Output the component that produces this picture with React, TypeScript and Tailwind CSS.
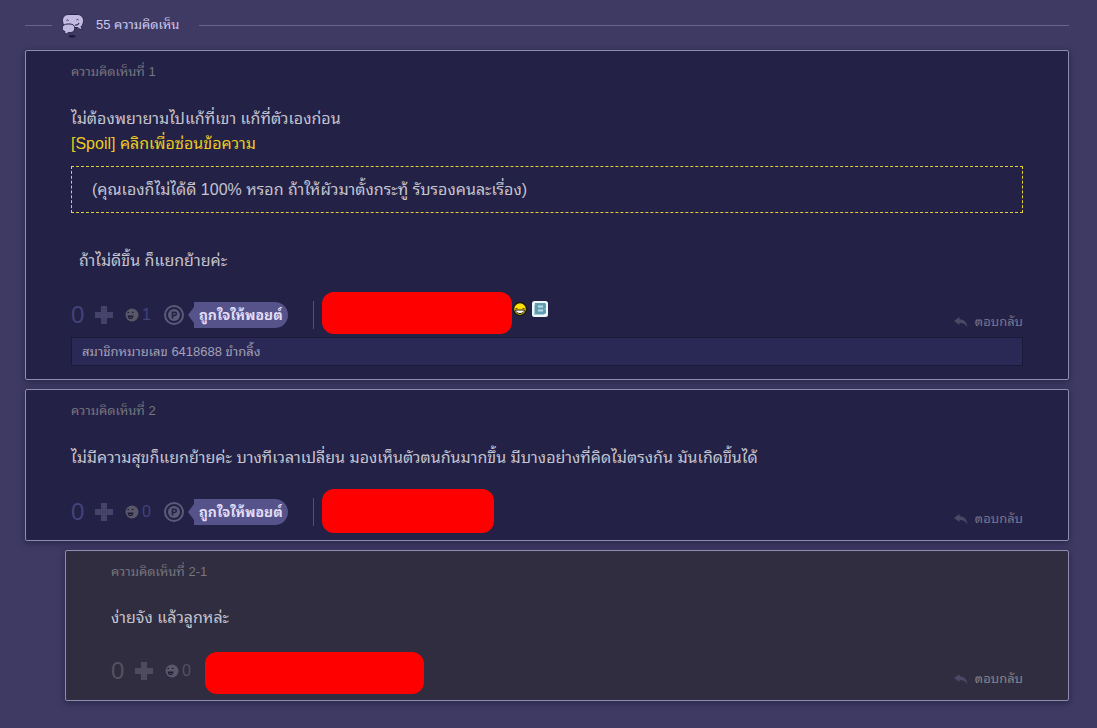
import type { ReactNode } from 'react'
import clsx from 'clsx'

interface CommentProps {
  no: string
  children: ReactNode
  author: ReactNode
  emotions?: number
  reply?: boolean
  likers?: string
}

function ChatIcon() {
  return (
    <svg width="24" height="25" viewBox="0 0 24 25" aria-hidden="true">
      <ellipse cx="11" cy="23.3" rx="3.500" ry="1.200" fill="#1c1a3c" />
      <path
        d="M8 1.5h8c4 0 6.500 2.500 6.500 6 0 2.800-.9 4.800-2.300 6 .1 1.200.5 2 1.300 3-2.200.2-3.700-.8-4.700-2H8C4 14.500 1.500 11.500 1.500 7.500s2.500-6 6.500-6z"
        fill="#c3bae2"
        stroke="#29264d"
      />
      <path
        d="M7 11h2c3 0 4.800 1.800 4.800 4.200 0 2.600-1.800 4.300-4.300 4.300H7.500c-1 .9-2.700 1.500-4.500 1.100.8-.6 1.100-1.300 1-2C2.300 18 1.200 16.600 1.200 15.200 1.200 12.700 3.500 11 7 11z"
        fill="#c3bae2"
        stroke="#29264d"
      />
      <path d="M5.500 7.500q1-1.200 2 0M15.500 7q1-1.200 2 0" fill="none" stroke="#29264d" />
      <path d="M14 12c2 .3 3.500-.5 4-2.200" fill="none" stroke="#29264d" strokeWidth="1.200" />
    </svg>
  )
}

function PlusIcon() {
  return (
    <svg width="18" height="18" viewBox="0 0 18 18" fill="currentColor" aria-hidden="true">
      <path d="M6 0h6v6h6v6h-6v6H6v-6H0V6h6z" />
    </svg>
  )
}

function FaceIcon() {
  return (
    <svg width="14" height="14" viewBox="0 0 14 14" aria-hidden="true">
      <circle cx="7" cy="7" r="6.500" fill="currentColor" />
      <path d="M2.500 4.800l1.500-.6M7 4.700l1.500-.6" stroke="#1c1b38" strokeWidth="1.200" />
      <path d="M2.500 7.500h6c-.2 2.500-1.500 3.600-3 3.600S2.900 10 2.500 7.500z" fill="#1c1b38" />
      <path d="M4.200 9.200h2.600v.8H4.600z" fill="currentColor" />
    </svg>
  )
}

function PointIcon() {
  return (
    <svg width="20" height="20" viewBox="0 0 20 20" fill="none" aria-hidden="true">
      <circle cx="10" cy="10" r="9" stroke="currentColor" strokeWidth="2" />
      <circle cx="10" cy="10" r="6" fill="currentColor" />
      <path d="M8.500 13.500V7.200h2.200a1.600 1.600 0 010 3.300H8.500" stroke="#232146" strokeWidth="1.600" />
    </svg>
  )
}

function ReplyIcon() {
  return (
    <svg width="14" height="11" viewBox="0 0 14 11" fill="currentColor" aria-hidden="true">
      <path d="M0 4L5.500 0v2.200c4.700.2 7.500 3 8 8.300C11.700 7.500 9.500 6 5.500 5.800V8z" />
    </svg>
  )
}

function LaughIcon() {
  return (
    <svg width="16" height="16" viewBox="0 0 16 16" aria-hidden="true">
      <circle cx="8" cy="8" r="6.500" fill="#fd0" stroke="#1d1a14" strokeWidth="1.500" />
      <path d="M3.500 7.500h2M10.500 7.500h2" stroke="#5a4a10" />
      <path d="M3.500 9h9c-.3 2.500-2.300 3.500-4.500 3.500S3.800 11.500 3.500 9z" fill="#fff" stroke="#1d1a14" />
    </svg>
  )
}

function BadgeIcon() {
  return (
    <svg width="16" height="16" viewBox="0 0 16 16" aria-hidden="true">
      <rect width="16" height="16" rx="2.500" fill="#eef7fa" />
      <path d="M2 4h2v9h8v1H2z" fill="#a9cdd9" />
      <path d="M3 2h10l1 1v4l-.7 1 .7 1v3l-1 1H3z" fill="#5f9db3" />
      <path d="M6 5.500h5M6 9.500h5" stroke="#b9dbe6" strokeWidth="1.800" />
    </svg>
  )
}

function Comment({ no, children, author, emotions = 0, reply, likers }: CommentProps) {
  return (
    <article
      className={clsx(
        'rounded-xs border border-[#8f8cb0] px-[45px] pt-[10px] shadow-[0_2px_6px_rgba(20,18,50,0.5)]',
        reply ? 'ml-10 bg-[#2f2d3f]' : 'bg-[#232146]',
        likers ? 'pb-[13px]' : 'pb-[6px]',
      )}
    >
      <h2 className="text-[13px] leading-[21px] text-[#78767e]">ความคิดเห็นที่ {no}</h2>
      <div
        className={clsx(
          'text-base leading-[25px] text-[#c5c4cf]',
          reply ? 'mt-[23px]' : 'mt-6',
        )}
      >
        {children}
      </div>
      <div className={clsx('mt-[19px] flex h-[45px]', reply ? 'items-end' : 'items-start')}>
        <div
          className={clsx(
            'flex h-[46px] items-center',
            reply ? 'text-[#545260]' : 'text-[#45427a]',
          )}
        >
          <span className="w-6 text-2xl">0</span>
          <button
            type="button"
            aria-label="โหวต"
            className={reply ? 'text-[#4d4b5c]' : 'text-[#45436a]'}
          >
            <PlusIcon />
          </button>
          <button type="button" className="ml-3 flex items-center gap-[3px] text-base">
            <span className="text-[#5a5868]">
              <FaceIcon />
            </span>
            {emotions}
          </button>
          {!reply && (
            <>
              <span className="ml-[13px] text-[#5c5a78]">
                <PointIcon />
              </span>
              <button type="button" className="ml-1 flex items-center">
                <span className="border-y-8 border-r-[6px] border-y-transparent border-r-[#56528a]" />
                <span className="h-[26px] rounded-r-full bg-[#56528a] px-[5px] text-sm leading-[26px] font-bold whitespace-nowrap text-[#e0dcf5]">
                  ถูกใจให้พอยต์
                </span>
              </button>
              <span className="ml-[25px] h-7 w-px bg-[#4b5578]" />
            </>
          )}
        </div>
        <div className={clsx('flex', reply ? 'ml-[14px]' : 'ml-2')}>{author}</div>
        <button
          type="button"
          className={clsx(
            'ml-auto flex h-[30px] items-center gap-[7px] self-end text-[13px]',
            reply ? 'text-[#85838e]' : 'text-[#77758f]',
          )}
        >
          <span className="text-[#4b4965]">
            <ReplyIcon />
          </span>
          ตอบกลับ
        </button>
      </div>
      {likers && (
        <p className="border border-[#1b193a] bg-[#2a2855] px-[10px] text-[13px] leading-[27px] text-[#a3a1b5]">
          {likers}
        </p>
      )}
    </article>
  )
}

export default function App() {
  return (
    <main className="min-h-screen bg-[#3e3a63] pt-[10px] pr-7 pb-7 pl-[25px] font-['Liberation_Sans','Noto_Sans_Thai_Looped','Loma','Waree','Garuda','Tahoma',sans-serif]">
      <header className="flex h-[30px] items-center">
        <span className="h-px w-[27px] bg-[#67638a]" />
        <span className="ml-[9px]">
          <ChatIcon />
        </span>
        <h1 className="ml-[11px] text-[13px] text-[#cfc8ee]">55 ความคิดเห็น</h1>
        <span className="ml-5 h-px flex-1 bg-[#67638a]" />
      </header>
      <section className="mt-[10px] flex flex-col gap-[9px]">
        <Comment
          no="1"
          emotions={1}
          likers="สมาชิกหมายเลข 6418688 ขำกลิ้ง"
          author={
            <>
              <span className="h-[42px] w-[190px] rounded-xl bg-[#f00]" />
              <span className="mt-[9px] flex h-4 gap-1">
                <LaughIcon />
                <BadgeIcon />
              </span>
            </>
          }
        >
          <p>ไม่ต้องพยายามไปแก้ที่เขา แก้ที่ตัวเองก่อน</p>
          <a href="#spoil" className="block text-[#eccb1e]">
            [Spoil] คลิกเพื่อซ่อนข้อความ
          </a>
          <div className="mt-[10px] border border-dashed border-[#e6cf3c] px-5 py-[10px]">
            (คุณเองก็ไม่ได้ดี 100% หรอก ถ้าให้ผัวมาตั้งกระทู้ รับรองคนละเรื่อง)
          </div>
          <p className="mt-[35px] pl-2">ถ้าไม่ดีขึ้น ก็แยกย้ายค่ะ</p>
        </Comment>
        <Comment no="2" author={<span className="h-[44px] w-[172px] rounded-xl bg-[#f00]" />}>
          <p>
            ไม่มีความสุขก็แยกย้ายค่ะ บางทีเวลาเปลี่ยน มองเห็นตัวตนกันมากขึ้น มีบางอย่างที่คิดไม่ตรงกัน
            มันเกิดขึ้นได้
          </p>
        </Comment>
        <Comment
          no="2-1"
          reply
          author={<span className="h-[42px] w-[219px] rounded-xl bg-[#f00]" />}
        >
          <p>ง่ายจัง แล้วลูกหล่ะ</p>
        </Comment>
      </section>
    </main>
  )
}
